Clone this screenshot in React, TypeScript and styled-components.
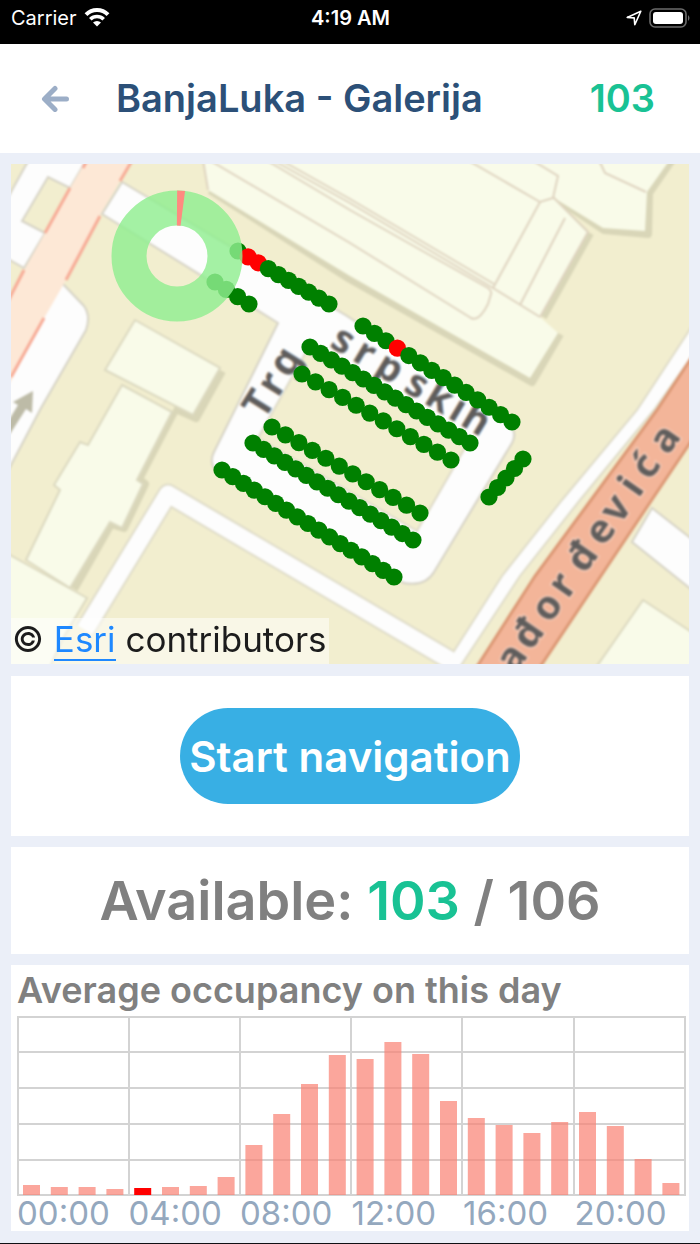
import React from "react";
import styled, { createGlobalStyle } from "styled-components";

const colors = {
  page: "#ebeff8",
  card: "#ffffff",
  title: "#2c5078",
  muted: "#9caec7",
  axis: "#94a8be",
  grey: "#808080",
  green: "#19c294",
  blue: "#38afe4",
  link: "#1e88ff",
};

const GlobalStyle = createGlobalStyle`
  * { box-sizing: border-box; }
  body {
    margin: 0;
    background: ${colors.page};
    font-family: Inter, "Liberation Sans", sans-serif;
  }
`;

const Screen = styled.div`
  min-height: 100vh;
  display: flex;
  flex-direction: column;
  background: ${colors.page};
  border-bottom: 1px solid #101014;
`;

const StatusBar = styled.div`
  display: grid;
  grid-template-columns: 1fr auto 1fr;
  align-items: center;
  height: 44px;
  padding: 0 10px 8px 11px;
  background: #000;
  color: #fff;
  font-size: 20px;
  line-height: 24px;
`;

const StatusGroup = styled.div<{ $end?: boolean }>`
  display: flex;
  align-items: center;
  gap: 7px;
  justify-content: ${(p) => (p.$end ? "flex-end" : "flex-start")};
`;

const Clock = styled.time`
  font-weight: 600;
`;

const Header = styled.header`
  display: flex;
  align-items: center;
  height: 109px;
  padding: 0 45px 2px 40px;
  background: ${colors.card};
`;

const BackButton = styled.button`
  display: flex;
  padding: 0;
  border: 0;
  background: none;
  color: ${colors.muted};
  cursor: pointer;
`;

const Title = styled.h1`
  flex: 1;
  margin: 0 0 0 46px;
  color: ${colors.title};
  font-size: 38px;
  font-weight: 600;
  line-height: 48px;
`;

const FreeCount = styled.span`
  color: ${colors.green};
  font-size: 38px;
  font-weight: 600;
  line-height: 48px;
`;

const Content = styled.main`
  display: flex;
  flex-direction: column;
  gap: 11px;
  padding: 11px;
`;

const MapCard = styled.section`
  position: relative;
  display: flex;
  margin-bottom: 1px;
  background: #f2eecf;
  overflow: hidden;
`;

const MapDrawing = styled.svg`
  display: block;
  width: 100%;
  height: auto;
`;

const MapGround = styled.g`
  filter: blur(1px);
`;

const Attribution = styled.p`
  position: absolute;
  left: 0;
  bottom: 0;
  margin: 0;
  padding: 0 2px 3px 1px;
  background: rgba(255, 255, 255, 0.5);
  color: #1c1c1c;
  font-size: 35px;
  line-height: 43px;
`;

const EsriLink = styled.a`
  display: inline-block;
  border-bottom: 2px solid ${colors.link};
  color: ${colors.link};
  line-height: 40px;
  text-decoration: none;
`;

const Card = styled.section<{ $pad: number }>`
  display: flex;
  align-items: center;
  justify-content: center;
  padding: ${(p) => p.$pad}px;
  background: ${colors.card};
`;

const PrimaryButton = styled.button`
  height: 96px;
  padding: 0 9px;
  border: 0;
  border-radius: 48px;
  background: ${colors.blue};
  color: #fff;
  font-family: inherit;
  font-size: 42px;
  font-weight: 600;
  cursor: pointer;
`;

const Available = styled.p`
  margin: 0;
  color: ${colors.grey};
  font-size: 54px;
  font-weight: 600;
  line-height: 65px;
`;

const Free = styled.span`
  color: ${colors.green};
`;

const ChartCard = styled.section`
  padding: 4px 3px 0 6px;
  background: ${colors.card};
`;

const ChartTitle = styled.h2`
  margin: 0 0 4px;
  color: ${colors.grey};
  font-size: 36px;
  font-weight: 600;
  line-height: 43px;
`;

const ChartDrawing = styled.svg`
  display: block;
  width: 100%;
  height: auto;
`;

const Hours = styled.div`
  display: grid;
  grid-template-columns: repeat(6, 1fr);
  color: ${colors.axis};
  font-size: 33px;
  line-height: 35px;
`;

type Point = [number, number];
type Row = { from: Point; to: Point; count: number; taken?: number[] };

const parkingRows: Row[] = [
  { from: [238, 251], to: [329, 304], count: 10, taken: [1, 2] },
  { from: [215, 282], to: [249, 304], count: 4 },
  { from: [363, 326], to: [512, 422], count: 14, taken: [3] },
  { from: [310, 347], to: [470, 443], count: 16 },
  { from: [302, 374], to: [451, 460], count: 12 },
  { from: [272, 427], to: [420, 513], count: 12 },
  { from: [253, 443], to: [413, 540], count: 16 },
  { from: [222, 470], to: [394, 577], count: 17 },
  { from: [489, 497], to: [523, 459], count: 5 },
];

const ParkingRow = ({ from, to, count, taken = [] }: Row) => (
  <>
    {Array.from({ length: count }, (_, i) => {
      const t = i / (count - 1);
      return (
        <circle
          key={i}
          cx={from[0] + (to[0] - from[0]) * t}
          cy={from[1] + (to[1] - from[1]) * t}
          r={8.6}
          fill={taken.includes(i) ? "#ff0000" : "#008000"}
        />
      );
    })}
  </>
);

type StreetProps = { name: string; at: Point; angle: number; stops: number[]; size: number };

const StreetName = ({ name, at, angle, stops, size }: StreetProps) => (
  <text
    transform={`translate(${at[0]} ${at[1]}) rotate(${angle})`}
    x={stops.join(" ")}
    y={0}
    textAnchor="middle"
    fontFamily='"Noto Sans", "DejaVu Sans", sans-serif'
    fontSize={size}
    fontWeight={700}
    fill="#5f5d5c"
    stroke="#ffffff"
    strokeOpacity={0.3}
    strokeWidth={3}
    paintOrder="stroke"
  >
    {name}
  </text>
);

const ParkingMap = () => (
  <MapDrawing viewBox="11 164 678 500" role="img" aria-label="Parking map">
    <MapGround>
      <rect x="1" y="154" width="698" height="520" fill="#f2eecf" />

      {/* access roads */}
      <g fill="#fdfdfd" stroke="#d6d3c6" strokeWidth="2">
        <path d="M32 154H90L70 188 48 177 22 221 45 233 24 268 1 255V210Z" />
        <path d="M62 283L84 306Q91 316 86 330L41 408 1 484V392Z" />
        <path d="M122 182L347 316 504 420Q519 430 512 443L434 572Q425 587 404 583L218 472Q208 464 214 452L278 323 102 214Z" />
        <path d="M652 508L702 547V598L632 542Z" />
      </g>
      <path d="M306 352L466 446 417 531 258 438Z" fill="#f2eecf" stroke="#dedac8" strokeWidth="2" />
      <path d="M85 630L168 494 450 660" fill="none" stroke="#dfdcc9" strokeWidth="21" strokeLinejoin="round" />
      <path d="M438 676L502 576 562 500 637 410 702 311V342L654 410 580 500 520 576 454 676Z" fill="#fdfdfd" stroke="#dfdcc9" strokeWidth="2" />
      <path d="M85 630L168 494 450 660" fill="none" stroke="#fdfdfd" strokeWidth="17" strokeLinejoin="round" />

      {/* main roads */}
      <path d="M90 154H136L120 181 100 215 66 280 43 320 1 400V318L23 272 45 233 70 188Z" fill="#fde8d6" />
      <g fill="none" stroke="#f7ab96" strokeWidth="3">
        <path d="M136 154L120 181M100 216L66 280M44 318L11 377M70 188L45 233M24 270L6 305M90 154L83 168" />
      </g>
      <path d="M471 676L535 576 591 500 657 410 702 342V425L647 507 534 676Z" fill="#f3b599" stroke="#dc9875" strokeWidth="3" />

      {/* one-way arrow */}
      <path d="M33 391L32 413 26 409 10 434 3 430 18 405 13 402Z" fill="#bdbba7" />

      {/* building shadows */}
      <g fill="none" stroke="#d9d6b8" strokeWidth="8" strokeLinejoin="round">
        <path d="M222 371L196 418 174 408M174 412L139 479 145 484 124 528 111 524 74 589" />
        <path d="M210 190L350 279 532 382 560 334M543 317L590 233M556 198L604 230 648 234 649 193 676 154" />
      </g>

      {/* buildings */}
      <g fill="#f9fbe9" stroke="#dcd9c0" strokeWidth="2">
        <path d="M122 385L172 412 137 480 143 484 122 528 110 522 70 588 26 560 60 490 54 485 80 442 88 445Z" />
        <path d="M135 320L220 368 193 415 105 370Z" />
        <path d="M1 550L87 598 62 640 46 676H1Z" />
        <path d="M643 600L702 639V676H590Z" />
        <path stroke="none" d="M202 154L208 190 350 276 530 378 558 333 540 317 588 232 554 198 603 228 645 231 647 192 674 154Z" />
      </g>
      <g fill="none" stroke="#dfd4c0" strokeWidth="2">
        <path d="M202 154L208 190" />
        <path d="M199 154L350 243 471 318Q479 322 488 304L491 294Q492 291 488 288L350 210 256 154" />
        <path d="M262 154L350 203 493 288 540 317M270 154L350 199 494 284" />
        <path d="M457 154L540 202 553 198 558 176 522 154" />
        <path d="M540 202L493 288M565 218L520 305M596 154L605 173 646 192" />
        <path d="M553 197L588 232 540 317" />
      </g>

      <StreetName name="Trg" at={[270, 411]} angle={-58} stops={[0, 24, 50]} size={40} />
      <StreetName name="srpskih" at={[337, 351]} angle={31} stops={[0, 25, 54, 86, 112, 134, 155]} size={39} />
      <StreetName
        name="ađorđevića"
        at={[522, 665]}
        angle={-55}
        stops={[0, 29, 62, 89, 123, 155, 182, 209, 234, 267]}
        size={40}
      />
    </MapGround>

    {parkingRows.map((row) => (
      <ParkingRow key={row.from.join()} {...row} />
    ))}

    {/* share of free and taken places */}
    <g fill="none" strokeWidth="35">
      <circle cx="177" cy="256" r="48" stroke="#90ee90" strokeOpacity="0.82" />
      <path d="M177 208A48 48 0 0 1 182.8 208.4" stroke="#ff8a80" />
    </g>
  </MapDrawing>
);

const occupancy = [
  10, 8, 8, 6, 7, 8, 9, 18, 50, 81, 111, 140, 136, 153, 141, 94, 77, 70, 62, 73, 83, 69, 36, 12,
];
const currentHour = 4;
const hourLabels = ["00:00", "04:00", "08:00", "12:00", "16:00", "20:00"];

const OccupancyChart = () => (
  <ChartDrawing viewBox="0 0 669 180" role="img" aria-label="Occupancy by hour">
    <g stroke="#d3d3d3" strokeWidth="2">
      {[1, 36, 72, 108, 144, 179].map((y) => (
        <line key={y} x1="0" x2="669" y1={y} y2={y} />
      ))}
      {[1, 112, 223, 334, 445, 557, 668].map((x) => (
        <line key={x} x1={x} x2={x} y1="0" y2="180" />
      ))}
    </g>
    {occupancy.map((value, hour) => (
      <rect
        key={hour}
        x={6 + hour * 27.8}
        y={179 - value}
        width="17"
        height={value}
        fill={hour === currentHour ? "#ff0000" : "#fa8072"}
        fillOpacity={hour === currentHour ? 1 : 0.7}
      />
    ))}
  </ChartDrawing>
);

const WifiIcon = () => (
  <svg width="26" height="20" viewBox="0 0 26 20" fill="none" stroke="#fff" strokeWidth="4" aria-hidden="true">
    <path d="M2 6.600A15.500 15.500 0 0 1 24 6.600" />
    <path d="M6.300 11.200A9.500 9.500 0 0 1 19.700 11.200" strokeWidth="3.600" />
    <path d="M13 18.500L9 14.600A5.600 5.600 0 0 1 17 14.600Z" fill="#fff" stroke="none" />
  </svg>
);

const LocationIcon = () => (
  <svg width="16" height="16" viewBox="0 0 16 16" fill="none" stroke="#fff" strokeWidth="1.6" strokeLinejoin="round" aria-hidden="true">
    <path d="M14.8 1.2L1.2 7.4 8.2 7.9 8.8 14.8Z" />
  </svg>
);

const BatteryIcon = () => (
  <svg width="41" height="20" viewBox="0 0 41 20" fill="none" aria-hidden="true">
    <rect x="1" y="1" width="36" height="18" rx="5" stroke="#6b6b6b" strokeWidth="1.6" />
    <rect x="4" y="4" width="30" height="12" rx="3" fill="#fff" />
    <path d="M39 7Q42 10 39 13Z" fill="#6b6b6b" />
  </svg>
);

const BackIcon = () => (
  <svg width="30" height="28" viewBox="0 0 30 28" fill="none" stroke="currentColor" strokeWidth="5" strokeLinecap="round" strokeLinejoin="round" aria-hidden="true">
    <path d="M15 4.500L4.500 15 15 25.500M5 15H26.500" />
  </svg>
);

export default function App() {
  return (
    <Screen>
      <GlobalStyle />
      <StatusBar>
        <StatusGroup>
          <span>Carrier</span>
          <WifiIcon />
        </StatusGroup>
        <Clock>4:19 AM</Clock>
        <StatusGroup $end>
          <LocationIcon />
          <BatteryIcon />
        </StatusGroup>
      </StatusBar>
      <Header>
        <BackButton type="button" aria-label="Back">
          <BackIcon />
        </BackButton>
        <Title>BanjaLuka - Galerija</Title>
        <FreeCount>103</FreeCount>
      </Header>
      <Content>
        <MapCard>
          <ParkingMap />
          <Attribution>
            © <EsriLink href="#esri">Esri</EsriLink> contributors
          </Attribution>
        </MapCard>
        <Card $pad={32}>
          <PrimaryButton type="button">Start navigation</PrimaryButton>
        </Card>
        <Card $pad={21}>
          <Available>
            Available: <Free>103</Free> / 106
          </Available>
        </Card>
        <ChartCard>
          <ChartTitle>Average occupancy on this day</ChartTitle>
          <OccupancyChart />
          <Hours>
            {hourLabels.map((label) => (
              <span key={label}>{label}</span>
            ))}
          </Hours>
        </ChartCard>
      </Content>
    </Screen>
  );
}
